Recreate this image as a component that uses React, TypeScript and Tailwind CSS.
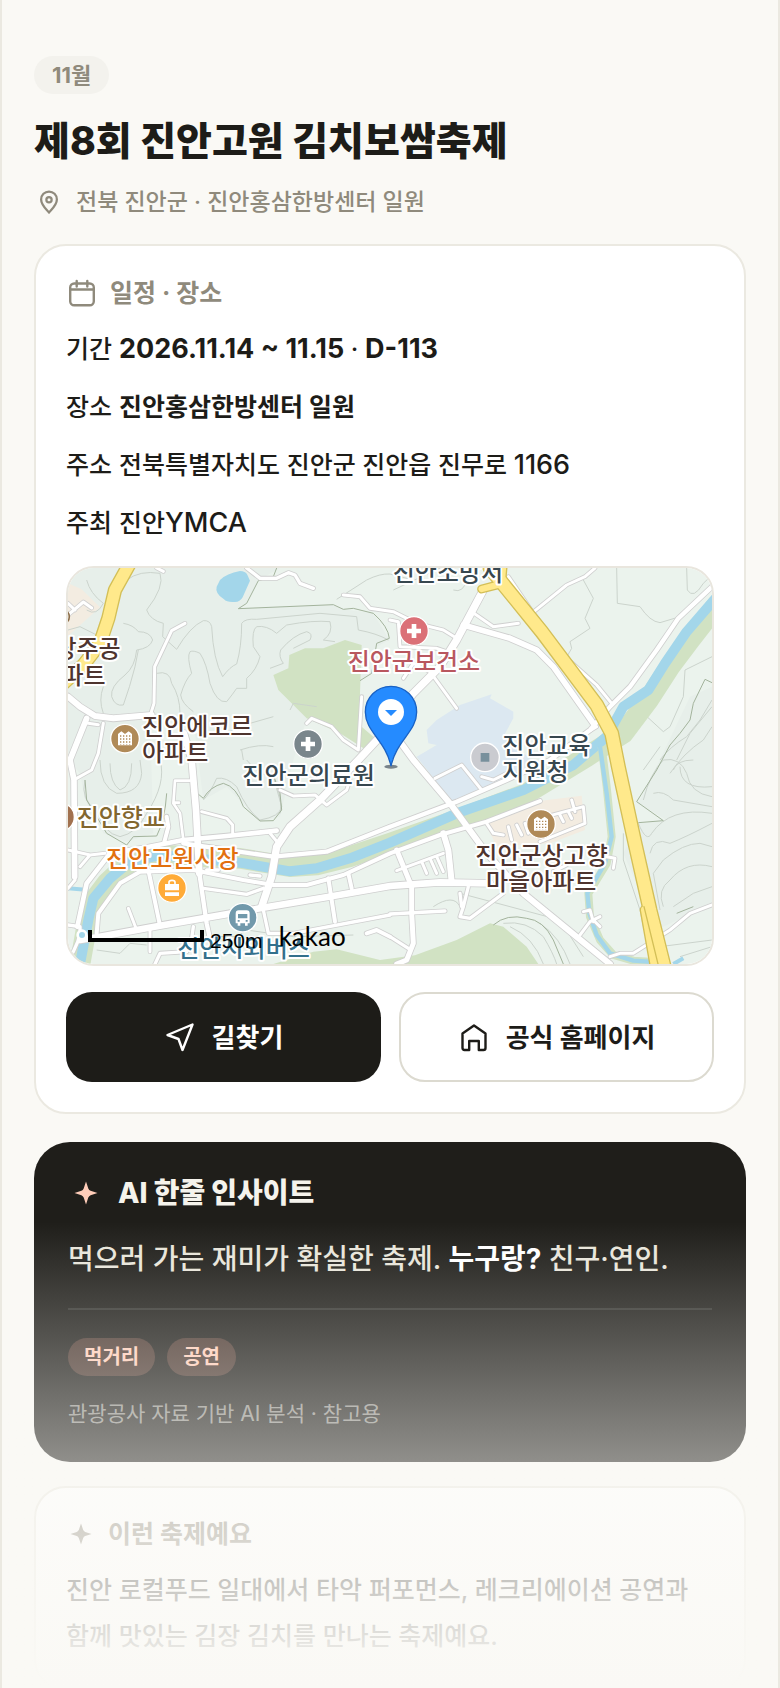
import type { ReactNode } from "react";

interface Road {
  d: string;
  w: number;
}

const ROADS: Road[] = [
  { d: "M24 410L60 440L105 468L160 475L275 465", w: 18 },
  { d: "M272 462L282 430L284 320L335 212L375 190", w: 9 },
  { d: "M80 475L30 600L42 660L44 950", w: 17 },
  { d: "M85 490L115 494M130 490L115 580L95 630L50 655", w: 9 },
  { d: "M372 520L395 600L408 750L418 940", w: 20 },
  { d: "M418 940L440 1090L455 1160", w: 13 },
  { d: "M560 24L600 55L650 55L685 38L705 45L720 70L760 85", w: 10 },
  { d: "M290 24L310 34M24 130L45 150M24 165L70 126L95 144", w: 9 },
  { d: "M850 105L900 110L930 145L1000 155L1070 190L1150 210L1190 235", w: 9 },
  { d: "M990 180L1015 185L1020 260L1130 265L1160 275M1030 355L1060 310L1110 335L1190 445", w: 9 },
  { d: "M1270 90L1190 240L1140 320L1060 400L960 530L895 600L780 720L690 800L650 860L635 950L605 1040", w: 22 },
  { d: "M1210 195L1350 235L1430 270L1480 320L1600 490", w: 17 },
  { d: "M1235 155L1300 200L1375 190", w: 9 },
  { d: "M1415 160L1520 75L1575 50L1605 24M1345 50L1420 160L1520 295L1610 375L1655 430", w: 9 },
  { d: "M1020 545L1060 600L1170 730L1280 880L1390 1000L1650 1212", w: 18 },
  { d: "M60 1140L120 1130L300 1097L600 1045L820 1008L990 978L1140 967L1290 970", w: 20 },
  { d: "M110 1120L115 1060L180 970L240 935L400 930L550 960L640 975L740 975L850 945L990 880L1140 825L1280 785L1440 723", w: 12 },
  { d: "M52 1100L80 970L150 880L260 862L370 840L500 828L650 812", w: 14 },
  { d: "M370 850L640 890L800 875L990 800L1190 725L1340 660L1470 600L1590 510L1650 440L1710 380L1790 270L1855 175L1956 80", w: 13 },
  { d: "M740 490L755 475L815 500L850 540L895 570L905 410M1560 530L1610 500", w: 9 },
  { d: "M390 662L345 662L340 730L360 760L370 840M340 728L357 728", w: 8 },
  { d: "M425 755L500 775L518 795L518 820M630 820L655 850", w: 9 },
  { d: "M660 690L700 708L765 705L800 735L860 690L870 660", w: 9 },
  { d: "M265 930L300 1097M320 770L325 800L312 850", w: 12 },
  { d: "M430 985L560 1003L610 985M475 930L440 930M570 945L600 948", w: 10 },
  { d: "M205 1045L230 1110M270 1100L270 1175M45 960L24 985M24 870L90 885L135 880M90 885L60 920", w: 9 },
  { d: "M24 1095L60 1100L60 1130L40 1175L24 1190M285 1212L300 1180L380 1175M400 1100L390 1170M610 1050L625 1120L700 1120L990 1065", w: 10 },
  { d: "M805 955L825 1085M865 940L875 985M920 1120L950 1110L990 1130", w: 12 },
  { d: "M1010 870L1055 980L1055 1060L1060 1150L1040 1200L1010 1212", w: 15 },
  { d: "M1150 820L1165 870L1175 965", w: 18 },
  { d: "M1010 932L1150 880M1085 905L1100 940M1110 895L1130 940M1130 890L1150 935", w: 9 },
  { d: "M990 1062L1155 1053M1225 980L1210 1040L1200 1070L1230 1075L1330 1000M990 1130L1045 1165M1200 1000L1205 1040", w: 10 },
  { d: "M1125 655L1205 615L1265 690M1265 650L1300 660L1340 640", w: 9 },
  { d: "M1280 790L1300 820L1330 825M1345 800L1355 840M1370 795L1385 825M1395 790L1405 820M1440 845L1575 790L1570 740L1440 775M1500 765L1510 785M1525 755L1535 775M1535 720L1545 755", w: 9 },
  { d: "M1640 890L1665 895L1660 925M1560 1125L1590 1085L1620 1070M1600 1080L1620 1100M1570 1055L1590 1050L1600 1085", w: 9 },
  { d: "M1650 1190L1680 1180L1720 1180L1830 1110L1890 1060L1956 1035M1480 935L1520 915", w: 9 },
];

const CONTOURS = [
  "M200 60Q240 30 300 40Q315 80 260 150Q270 180 310 190L308 230L350 268",
  "M190 190Q220 195 235 215Q270 215 278 240Q270 265 230 270Q225 320 195 345Q150 380 155 410Q165 440 190 435Q210 380 225 320L235 270",
  "M350 268Q390 200 430 182Q450 180 455 200Q460 300 488 350Q510 320 530 312Q545 260 545 190Q555 175 590 178L780 160L890 170L895 210Q950 220 985 240",
  "M400 455Q365 430 362 405Q375 360 395 340Q380 290 390 275Q400 270 420 280Q440 310 450 370Q470 430 500 425Q520 400 530 385L560 385L560 355Q590 330 600 290L580 260Q575 210 590 200Q620 195 650 220L680 195Q760 180 810 185Q820 220 790 240L825 245",
  "M630 325L670 310Q655 290 662 270Q700 225 740 215Q760 220 750 240L700 265",
  "M80 60Q90 100 130 130Q110 170 80 150M24 210L60 200L110 225M130 380Q115 420 130 460M290 340Q330 330 335 370Q360 410 360 460L370 500",
  "M120 600Q120 680 170 700Q240 700 245 640L240 600M150 610Q150 670 180 690Q215 680 215 610",
  "M300 600Q320 670 260 760Q230 820 180 830Q130 820 110 750Q60 720 75 660",
  "M560 600Q600 650 640 650Q670 720 660 760M430 720Q450 700 470 655Q500 650 530 680Q560 750 600 780Q660 770 665 740L640 650",
  "M540 570Q600 550 640 560M550 600L545 570M690 450L700 430L770 440M640 470L570 490Q540 510 480 520",
  "M1670 24L1672 130L1740 140Q1770 185 1800 188L1860 170M1880 24L1882 90Q1900 120 1930 70L1956 45",
  "M1570 60L1600 115L1575 175L1590 205L1530 245L1535 265L1515 300M1140 24L1000 90M1180 90Q1210 100 1220 60",
  "M1750 460L1810 515L1830 500L1870 410L1875 330L1956 290M1850 600L1890 520L1956 440",
  "M1800 600Q1830 560 1880 530L1920 480L1956 420M1830 640Q1870 580 1930 540L1956 500M1750 630L1800 560",
  "M1750 720Q1770 640 1810 600Q1860 590 1880 640Q1890 700 1956 710M1780 700Q1810 690 1840 720L1956 740M1840 630Q1850 600 1900 600M1860 620Q1860 690 1956 680",
  "M1735 790Q1760 850 1775 820Q1830 740 1956 760M1690 820L1690 900L1740 1050L1750 1100",
  "M1770 880Q1780 830 1830 850Q1880 830 1956 790M1800 1050L1780 940L1810 900Q1870 850 1920 850L1956 860M1810 1040Q1790 990 1830 960Q1880 900 1956 920M1840 1040L1900 1000L1956 980M1800 1160L1956 1140M1860 1190L1956 1160",
  "M1120 1040Q1180 1000 1200 1040M1330 1090Q1400 1080 1450 1130Q1480 1180 1490 1212M1350 1100Q1420 1130 1450 1212M1440 1090Q1500 1130 1530 1212M1200 1000L1500 1080L1570 1190",
  "M830 118L920 60Q960 40 990 42L1060 60M110 1170L180 1180L210 1150L260 1155M460 1130L530 1130L560 1110L700 1130L880 1125",
];

interface LabelProps {
  x: number;
  y: number;
  fill: string;
  end?: boolean;
  children: ReactNode;
}

function Label({ x, y, fill, end, children }: LabelProps) {
  return (
    <text
      x={x}
      y={y}
      fill={fill}
      fontSize={72}
      fontWeight={500}
      stroke="#ffffff"
      strokeWidth={12}
      strokeLinejoin="round"
      paintOrder="stroke"
      textAnchor={end ? "end" : "start"}
    >
      {children}
    </text>
  );
}

function Poi({ x, y, fill, children }: { x: number; y: number; fill: string; children?: ReactNode }) {
  return (
    <g transform={`translate(${x} ${y})`}>
      <circle r="43" fill={fill} stroke="#ffffff" strokeWidth="4" />
      {children}
    </g>
  );
}

function Apartment() {
  return (
    <>
      <path d="M-21 20V-14L-11 -22L0 -14L11 -22L21 -14V20Z" fill="#ffffff" />
      <path
        d="M-13 -10V18M-4 -10V18M5 -10V18M14 -10V18"
        stroke="#b08a58"
        strokeWidth="4"
        strokeDasharray="4 5"
      />
    </>
  );
}

function FestivalMap() {
  return (
    <svg
      viewBox="24 24 1932 1188"
      preserveAspectRatio="xMidYMid slice"
      className="block h-full w-full font-['Noto_Sans_CJK_KR',sans-serif]"
      role="img"
      aria-label="지도"
    >
      <path d="M24 24H1956V1212H24Z" fill="#ebf3ed" />
      {/* hills */}
      <path
        d="M24 24H660L595 60L560 130L535 146L820 134L850 148L940 160L988 240L950 260L935 340L900 360L740 480L700 600L660 770L600 785L500 680L430 720L400 480L270 465L280 820L200 845L130 820L75 720L60 640L24 600Z"
        fill="#e7efea"
      />
      <path d="M1956 380L1890 410L1780 640L1735 730L1820 780L1735 790L1690 880L1790 1110L1956 1030Z" fill="#e7efea" />
      <path
        d="M24 70L65 88L120 142L24 228ZM1275 790L1420 725L1565 707L1575 810L1470 850L1310 858Z"
        fill="#f3ece1"
      />
      <path
        d="M1100 510L1130 480L1200 435L1295 403L1290 415L1360 455L1360 475L1330 530L1440 620L1180 730L1070 590L1130 555L1105 550Z"
        fill="#dce8f1"
      />
      <path
        d="M640 345L685 325L688 285L735 265L790 265L855 240L905 255L900 400L905 500L940 530L915 568L840 520L740 475L655 390Z"
        fill="#d1e2c3"
      />
      <path
        d="M640 1212L760 1175L830 1168L960 1200L1065 1186L1190 1140L1290 1090L1330 1100L1400 1160L1435 1212Z"
        fill="#d1e2c3"
      />
      <g fill="none" stroke="#cbd3cc" strokeWidth="3">
        {CONTOURS.map((d) => (
          <path key={d} d={d} />
        ))}
      </g>
      <g fill="none" stroke="#a3b39c" strokeWidth="3">
        <path d="M650 24L640 50L595 62L560 130L535 146L820 134L850 148L880 145L940 160Q985 200 988 235L950 250L935 340L900 362" />
        <path d="M1956 368L1935 358L1900 430L1890 480L1860 520L1830 555L1790 630L1730 725L1810 782L1735 788M1850 1060L1900 1040" />
        <path d="M75 660L80 720L140 820L200 855L220 830L290 828Q315 780 320 700M400 690L430 715Q450 680 490 670Q530 680 550 740L600 783L640 782L665 750L660 700L640 645" />
        <path d="M1300 1095Q1340 1060 1400 1075Q1450 1080 1480 1140L1510 1212" />
      </g>

      {/* river with its banks */}
      <g fill="none" strokeLinejoin="round">
        <path
          d="M1975 130L1890 240L1830 320L1765 420L1690 520L1580 590L1400 700L1190 780L990 850L870 890L770 915L690 920L540 895L300 885L210 905L140 970L95 1030L80 1100L60 1212"
          stroke="#d1e2c3"
          strokeWidth="62"
        />
        <path
          d="M1975 105L1880 215L1815 310L1765 390L1690 440L1640 530L1540 615L1390 690L1190 760L990 848L870 895L770 925L690 934L540 908L300 885L210 905L150 955L100 1015L85 1080L60 1212"
          stroke="#a3d6ea"
          strokeWidth="30"
        />
        <path
          d="M1625 560L1640 680L1655 830L1640 910L1585 1000L1590 1070L1620 1140L1660 1185L1720 1202L1780 1206"
          stroke="#d1e2c3"
          strokeWidth="24"
        />
        <path
          d="M1620 560L1640 700L1655 830L1635 910L1582 1000L1588 1060L1610 1125L1650 1180L1720 1202L1780 1206"
          stroke="#a3d6ea"
          strokeWidth="13"
        />
        <path d="M24 985L85 990M1840 1212L1870 1195" stroke="#a3d6ea" strokeWidth="12" />
      </g>
      <path
        d="M480 60Q500 40 540 33Q556 33 562 44L570 62L548 112Q540 126 525 126Q500 128 492 118Q464 100 470 80Z"
        fill="#a3d6ea"
      />

      <g fill="none" stroke="#cfcfcf" strokeLinecap="round" strokeLinejoin="round">
        {ROADS.map((road) => (
          <path key={road.d} d={road.d} strokeWidth={road.w + 5} />
        ))}
      </g>
      <g fill="none" stroke="#ffffff" strokeLinecap="round" strokeLinejoin="round">
        {ROADS.map((road) => (
          <path key={road.d} d={road.d} strokeWidth={road.w} />
        ))}
      </g>
      <circle cx="66" cy="1125" r="13" fill="#a3d6ea" stroke="#ffffff" strokeWidth="8" />

      {/* highways */}
      <g fill="none" strokeLinejoin="round" strokeLinecap="round">
        <g stroke="#d3bf57">
          <path d="M215 0L165 90L145 175L120 250L70 315L10 370" strokeWidth="43" />
          <path d="M1265 87L1330 70M1330 10L1325 70" strokeWidth="27" />
          <path d="M1290 24L1445 215L1610 435L1655 520L1675 620L1725 850L1770 1050L1815 1230" strokeWidth="45" />
          <path d="M1755 1050L1785 1220" strokeWidth="32" />
        </g>
        <g stroke="#ffe98b">
          <path d="M1755 1050L1785 1220" strokeWidth="24" />
          <path d="M215 0L165 90L145 175L120 250L70 315L10 370" strokeWidth="35" />
          <path d="M1265 87L1330 70M1330 10L1325 70" strokeWidth="19" />
          <path d="M1290 24L1445 215L1610 435L1655 520L1675 620L1725 850L1770 1050L1815 1230" strokeWidth="37" />
        </g>
        <path d="M1752 1040L1796 1220" stroke="#d3bf57" strokeWidth="4" />
      </g>

      <Poi x={195} y={536} fill="#b08a58">
        <Apartment />
      </Poi>
      <Poi x={1443} y={792} fill="#b08a58">
        <Apartment />
      </Poi>
      <Poi x={744} y={552} fill="#7a868c">
        <path d="M0 -21V21M-21 0H21" stroke="#ffffff" strokeWidth="14" />
      </Poi>
      <Poi x={1062} y={213} fill="#db7077">
        <path d="M0 -21V21M-21 0H21" stroke="#ffffff" strokeWidth="14" />
      </Poi>
      <Poi x={1275} y={592} fill="#cacbd0">
        <path d="M-13 -13H13V13H-13Z" fill="#78909c" />
      </Poi>
      <Poi x={336} y={984} fill="#ffab38">
        <path d="M-21 -12H21V7H-21ZM-21 13H21V24H-21Z" fill="#ffffff" />
        <path d="M-9 -8V-17Q-9 -23 0 -23Q9 -23 9 -17V-8" fill="none" stroke="#ffffff" strokeWidth="5" />
      </Poi>
      <Poi x={548} y={1073} fill="#7199ab">
        <path d="M-21 -12Q-21 -22 -12 -22H12Q21 -22 21 -12V17H15V24H7V17H-7V24H-15V17H-21Z" fill="#ffffff" />
        <path d="M-14 -11H14V2H-14ZM-15 7H-9V12H-15ZM9 7H15V12H9Z" fill="#7199ab" />
      </Poi>
      <Poi x={0} y={771} fill="#a1714f" />
      <circle cx="6" cy="170" r="22" fill="#f3ece1" stroke="#8d6e4a" strokeWidth="5" />

      <Label x={998} y={62} fill="#37474f">진안소방서</Label>
      <Label x={863} y={330} fill="#b9575f">진안군보건소</Label>
      <Label x={182} y={291} fill="#4e342e" end>상주공</Label>
      <Label x={137} y={371} fill="#4e342e" end>파트</Label>
      <Label x={246} y={524} fill="#4e342e">진안에코르</Label>
      <Label x={246} y={604} fill="#4e342e">아파트</Label>
      <Label x={547} y={672} fill="#37474f">진안군의료원</Label>
      <Label x={50} y={799} fill="#82672f">진안향교</Label>
      <Label x={138} y={920} fill="#e2700f">진안고원시장</Label>
      <Label x={352} y={1191} fill="#33708c">진안시외버스</Label>
      <Label x={1327} y={582} fill="#37474f">진안교육</Label>
      <Label x={1327} y={661} fill="#37474f">지원청</Label>
      <Label x={1246} y={911} fill="#4e342e">진안군상고향</Label>
      <Label x={1278} y={990} fill="#4e342e">마을아파트</Label>

      {/* marker */}
      <ellipse cx="993" cy="620" rx="20" ry="6" fill="#5b6670" opacity="0.8" />
      <path
        d="M993 379C1036 379 1070 413 1070 456C1070 515 1010 540 993 618C976 540 916 515 916 456C916 413 950 379 993 379Z"
        fill="#258bff"
        stroke="#1a62c4"
        strokeWidth="4"
      />
      <circle cx="993" cy="456" r="39" fill="#ffffff" />
      <path d="M975 450H1011L993 468Z" fill="#258bff" />

      <path d="M90 1110V1140H426V1110" fill="none" stroke="#000000" strokeWidth="12" />
      <text x="450" y="1164" fontSize="63" fill="#000000" className="font-['Liberation_Sans',sans-serif]">
        250m
      </text>
      <text x="656" y="1157" fontSize="78" fill="#000000" className="font-['Lato',sans-serif]">
        kakao
      </text>
    </svg>
  );
}

function LineIcon({ children, className }: { children: ReactNode; className: string }) {
  return (
    <svg
      viewBox="0 0 32 32"
      fill="none"
      stroke="currentColor"
      strokeWidth="2.400"
      strokeLinecap="round"
      strokeLinejoin="round"
      className={className}
      aria-hidden="true"
    >
      {children}
    </svg>
  );
}

function Spark({ className }: { className?: string }) {
  return (
    <svg viewBox="0 0 24 24" fill="currentColor" className={className} aria-hidden="true">
      <path d="M12 0.500L14.300 7.400Q15 9 16.600 9.700L23.500 12L16.600 14.300Q15 15 14.300 16.600L12 23.500L9.700 16.600Q9 15 7.400 14.300L0.500 12L7.400 9.700Q9 9 9.700 7.400Z" />
    </svg>
  );
}

function InfoRow({ label, children }: { label: string; children: ReactNode }) {
  return (
    <div className="flex gap-[7px] text-[25px] leading-[46px] font-medium">
      <dt>{label}</dt>
      <dd>{children}</dd>
    </div>
  );
}

export default function App() {
  return (
    <div className="relative h-screen overflow-hidden border-x-2 border-[#ebe9e1] bg-[#faf9f5] font-['Inter','Noto_Sans_CJK_KR',sans-serif] text-[#1d1c18]">
      <main className="flex flex-col px-8 pt-14">
        <header className="flex flex-col items-start">
          <span className="rounded-full bg-[#f3f2ed] px-[18px] text-[22px] leading-[38px] font-bold text-[#8f8a7c]">
            11월
          </span>
          <h1 className="mt-5 text-[39px] leading-[54px] font-extrabold">제8회 진안고원 김치보쌈축제</h1>
          <p className="mt-4 flex items-center gap-[15px] pl-[3px] text-[23px] leading-9 font-medium text-[#8f8a7c]">
            <LineIcon className="size-6">
              <path
                strokeWidth="3"
                d="M16 30C13 26 5.500 20 5.500 12.500A10.500 10.500 0 0 1 26.500 12.500C26.500 20 19 26 16 30Z"
              />
              <circle strokeWidth="3" cx="16" cy="13" r="3.500" />
            </LineIcon>
            전북 진안군 · 진안홍삼한방센터 일원
          </p>
        </header>

        <section className="mt-6 rounded-[32px] border-2 border-[#ebe9e1] bg-white p-[30px]">
          <h2 className="flex items-center gap-3 text-[25px] leading-[34px] font-bold text-[#8f8a7c]">
            <LineIcon className="size-8">
              <rect x="4.200" y="6.500" width="23.600" height="21.800" rx="4" />
              <path d="M4.200 12.500H27.800M10.700 4V9.500M21.300 4V9.500" />
            </LineIcon>
            일정 · 장소
          </h2>
          <dl className="mt-4 flex flex-col gap-3">
            <InfoRow label="기간">
              <b className="text-[27px]">2026.11.14 ~ 11.15</b> · <b className="text-[27px]">D-113</b>
            </InfoRow>
            <InfoRow label="장소">
              <b>진안홍삼한방센터 일원</b>
            </InfoRow>
            <InfoRow label="주소">
              전북특별자치도 진안군 진안읍 진무로 <span className="text-[27px]">1166</span>
            </InfoRow>
            <InfoRow label="주최">
              진안<span className="text-[27px]">YMCA</span>
            </InfoRow>
          </dl>
          <div className="mt-5 h-[400px] overflow-hidden rounded-[28px] border-2 border-[#e9e6de]">
            <FestivalMap />
          </div>
          <div className="mt-[26px] grid grid-cols-2 gap-[18px] text-[26px] font-bold">
            <button
              type="button"
              className="flex h-[90px] items-center justify-center gap-4 rounded-[26px] bg-[#1d1c18] text-white"
            >
              <LineIcon className="size-8">
                <path d="M3.500 14L28.500 3.500L18.500 29L14.500 18Z" />
              </LineIcon>
              길찾기
            </button>
            <a
              href="#"
              className="flex h-[90px] items-center justify-center gap-4 rounded-[26px] border-2 border-[#dcdad0] bg-white"
            >
              <LineIcon className="size-8">
                <path d="M4.500 12.500L16 4.500L27.500 12.500V27Q27.500 29 25.500 29H20.800V20H11.200V29H6.500Q4.500 29 4.500 27Z" />
              </LineIcon>
              공식 홈페이지
            </a>
          </div>
        </section>

        <section className="mt-7 rounded-[36px] bg-[#1f1e1a] px-[34px] pt-[34px] pb-8">
          <h2 className="flex items-center gap-5 pl-[6px] text-[28px] leading-[34px] font-extrabold text-[#f5f3ec]">
            <Spark className="size-6 text-[#ffcdb9]" />
            AI 한줄 인사이트
          </h2>
          <p className="mt-6 text-[28px] leading-[50px] font-medium text-[#e8e5da]">
            먹으러 가는 재미가 확실한 축제. <b className="text-white">누구랑?</b> 친구·연인.
          </p>
          <div className="mt-6 border-t-2 border-white/10 pt-7">
            <ul className="flex gap-3 text-[20px] leading-[38px] font-bold text-[#ffcdb9]">
              <li className="rounded-full bg-[#ffa08c]/20 px-4">먹거리</li>
              <li className="rounded-full bg-[#ffa08c]/20 px-4">공연</li>
            </ul>
            <p className="mt-[22px] text-[21px] leading-8 text-[#f5f3ec]/55">관광공사 자료 기반 AI 분석 · 참고용</p>
          </div>
        </section>

        <section className="mt-6 rounded-[32px] border-2 border-[#ebe9e1] bg-white p-[30px]">
          <h2 className="flex items-center gap-4 pl-1 text-[25px] leading-8 font-bold text-[#8f8a7c]">
            <Spark className="size-[22px]" />
            이런 축제예요
          </h2>
          <p className="mt-[17px] text-[25px] leading-[46px] font-medium">
            진안 로컬푸드 일대에서 타악 퍼포먼스, 레크리에이션 공연과 함께 맛있는 김장 김치를 만나는 축제예요.
          </p>
        </section>
      </main>
      <div className="pointer-events-none absolute inset-x-0 bottom-0 h-[466px] bg-linear-to-b from-[#faf9f5]/0 to-[#faf9f5]" />
    </div>
  );
}
